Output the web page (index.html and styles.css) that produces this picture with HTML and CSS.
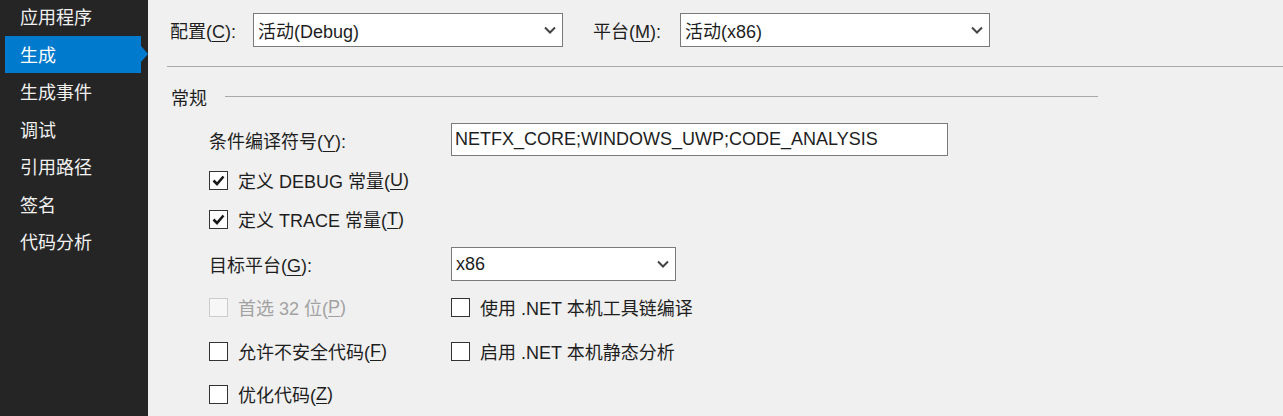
FILE: index.html
```html
<!DOCTYPE html>
<html lang="zh-CN">
<head>
<meta charset="utf-8">
<title>生成</title>
<link rel="stylesheet" href="styles.css">
</head>
<body>
<div class="app">
  <nav class="sidebar">
    <ul class="nav-list">
      <li class="nav-item">应用程序</li>
      <li class="nav-item active">生成</li>
      <li class="nav-item">生成事件</li>
      <li class="nav-item">调试</li>
      <li class="nav-item">引用路径</li>
      <li class="nav-item">签名</li>
      <li class="nav-item">代码分析</li>
    </ul>
  </nav>
  <main class="content">
    <div class="toolbar">
      <span class="tb-label tb-label-config">配置(<u>C</u>):</span>
      <div class="select select-wide"><span class="select-text">活动(Debug)</span><svg class="chev" width="12" height="8" viewBox="0 0 12 8"><path d="M1 1.5 L6 6.5 L11 1.5" fill="none" stroke="#444" stroke-width="2"/></svg></div>
      <span class="tb-label tb-label-platform">平台(<u>M</u>):</span>
      <div class="select select-wide"><span class="select-text">活动(x86)</span><svg class="chev" width="12" height="8" viewBox="0 0 12 8"><path d="M1 1.5 L6 6.5 L11 1.5" fill="none" stroke="#444" stroke-width="2"/></svg></div>
    </div>
    <div class="divider"></div>
    <section class="group">
      <div class="group-header"><span class="group-title">常规</span><span class="group-line"></span></div>
      <div class="form">
        <span class="form-label">条件编译符号(<u>Y</u>):</span>
        <div class="textbox">NETFX_CORE;WINDOWS_UWP;CODE_ANALYSIS</div>

        <label class="check span2"><span class="box"><svg width="13" height="11" viewBox="0 0 13 11"><path d="M1.5 5.5 L5 9 L11.5 1.5" fill="none" stroke="#1a1a1a" stroke-width="2.6"/></svg></span>定义 DEBUG 常量(<u>U</u>)</label>

        <label class="check span2"><span class="box"><svg width="13" height="11" viewBox="0 0 13 11"><path d="M1.5 5.5 L5 9 L11.5 1.5" fill="none" stroke="#1a1a1a" stroke-width="2.6"/></svg></span>定义 TRACE 常量(<u>T</u>)</label>

        <span class="form-label">目标平台(<u>G</u>):</span>
        <div class="select select-narrow"><span class="select-text">x86</span><svg class="chev" width="12" height="8" viewBox="0 0 12 8"><path d="M1 1.5 L6 6.5 L11 1.5" fill="none" stroke="#444" stroke-width="2"/></svg></div>

        <label class="check disabled"><span class="box"></span>首选 32 位(<u>P</u>)</label>
        <label class="check"><span class="box"></span>使用 .NET 本机工具链编译</label>

        <label class="check"><span class="box"></span>允许不安全代码(<u>F</u>)</label>
        <label class="check"><span class="box"></span>启用 .NET 本机静态分析</label>

        <label class="check"><span class="box"></span>优化代码(<u>Z</u>)</label>
      </div>
    </section>
  </main>
</div>
</body>
</html>
```
FILE: styles.css
```css
* { box-sizing: border-box; }
html, body {
  margin: 0;
  padding: 0;
  height: 100%;
  overflow: hidden;
}
body {
  font-family: "Liberation Sans", "Noto Sans CJK SC", sans-serif;
  font-size: 18px;
  color: #1e1e1e;
  background: #f0f0f0;
}
u { text-decoration-thickness: 1px; text-underline-offset: 3px; }

.app {
  display: flex;
  height: 416px;
}

.sidebar {
  width: 148px;
  flex: none;
  background: #252526;
}
.nav-list {
  list-style: none;
  margin: -2px 0 0;
  padding: 0;
}
.nav-item {
  position: relative;
  height: 37.5px;
  line-height: 37.5px;
  padding-top: 2px;
  padding-left: 15px;
  margin-left: 5px;
  margin-right: 7px;
  color: #f1f1f1;
  white-space: nowrap;
}
.nav-item.active {
  background: #007acc;
  color: #ffffff;
}
.nav-item.active::after {
  content: "";
  position: absolute;
  right: -7px;
  top: 50%;
  margin-top: -8px;
  border-style: solid;
  border-width: 8px 0 8px 7px;
  border-color: transparent transparent transparent #007acc;
}

.content {
  flex: 1;
  min-width: 0;
}

.toolbar {
  display: flex;
  align-items: center;
  height: 34px;
  margin-top: 13px;
  padding-left: 22px;
}
.tb-label { white-space: nowrap; }
.tb-label-config { width: 83px; }
.tb-label-platform { width: 87px; margin-left: 30px; }

.select {
  display: flex;
  align-items: center;
  justify-content: space-between;
  height: 34px;
  background: #ffffff;
  border: 1px solid #7a7a7a;
  padding: 0 6px 0 4px;
}
.select-wide { width: 310px; }
.select-narrow { width: 225px; }
.select-text { white-space: nowrap; }
.chev { flex: none; }

.divider {
  height: 1px;
  background: #a9a9a9;
  margin: 19px 0 0 19px;
}

.group {
  margin-left: 23px;
  width: 927px;
}
.group-header {
  display: flex;
  align-items: center;
  height: 30px;
  margin-top: 15px;
}
.group-title { white-space: nowrap; }
.group-line {
  flex: 1;
  height: 1px;
  background: #a9a9a9;
  margin-left: 18px;
  margin-top: -1px;
}

.form {
  display: grid;
  grid-template-columns: 242px auto;
  grid-template-rows: 33px 48px 30px 60px 26px 62px 24px;
  align-items: center;
  justify-items: start;
  margin-top: 11px;
  margin-left: 38px;
}
.form-label { white-space: nowrap; }
.span2 { grid-column: 1 / 3; }

.textbox {
  width: 497px;
  height: 33px;
  line-height: 31px;
  background: #ffffff;
  border: 1px solid #7a7a7a;
  padding-left: 3px;
  white-space: nowrap;
}

.check {
  display: flex;
  align-items: center;
  white-space: nowrap;
}
.box {
  display: flex;
  align-items: center;
  justify-content: center;
  width: 19px;
  height: 19px;
  border: 1px solid #333333;
  background: #ffffff;
  margin-right: 10px;
  flex: none;
}
.check.disabled { color: #a2a2a2; }
.check.disabled .box { border-color: #cccccc; background: #f7f7f7; }
```
